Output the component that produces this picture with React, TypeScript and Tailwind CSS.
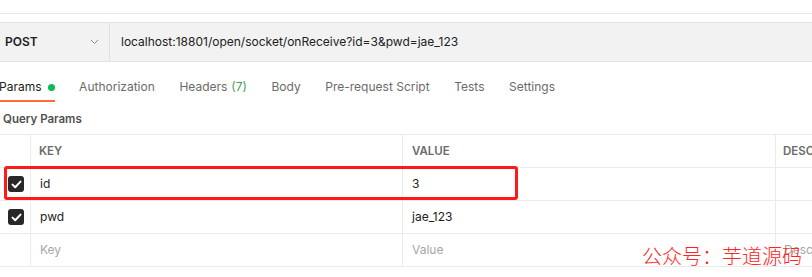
import React from "react";

const tabs = [
  { label: "Authorization" },
  { label: "Headers", count: "(7)" },
  { label: "Body" },
  { label: "Pre-request Script" },
  { label: "Tests" },
  { label: "Settings" },
];

const rows = [
  { key: "id", value: "3", checked: true },
  { key: "pwd", value: "jae_123", checked: true },
];

const Check = () => (
  <span className="flex h-[16px] w-[16px] items-center justify-center rounded-[3px] bg-[#282828]">
    <svg width="11" height="9" viewBox="0 0 11 9" fill="none">
      <path d="M1.5 4.6 L4.2 7.2 L9.5 1.6" stroke="#fff" strokeWidth="2" strokeLinecap="round" strokeLinejoin="round" />
    </svg>
  </span>
);

export default function App() {
  return (
    <div className="relative h-[277px] w-[812px] overflow-hidden bg-white font-['Inter','Liberation_Sans',sans-serif] text-[#212121]">
      <div className="h-[14px] border-b border-[#e8e8e8]" />

      {/* request bar */}
      <div className="mt-[8px] flex h-[40px] border-y border-[#e3e3e3] bg-[#f2f2f2]">
        <div className="flex w-[110px] items-center justify-between border-r border-[#e0e0e0] pl-[5px] pr-[10px]">
          <span className="text-[12px] font-semibold">POST</span>
          <svg width="9" height="6" viewBox="0 0 9 6" fill="none">
            <path d="M1 1 L4.5 4.5 L8 1" stroke="#8a8a8a" strokeWidth="1" />
          </svg>
        </div>
        <div className="flex items-center pl-[11px] text-[12px]">
          localhost:18801/open/socket/onReceive?id=3&amp;pwd=jae_123
        </div>
      </div>

      {/* tabs */}
      <div className="ml-[-1px] flex gap-[24.6px] text-[12px] text-[#6b6b6b]">
        <div className="flex items-center gap-[6px] border-b-2 border-[#ff6c37] pb-[3px] pt-[15px] leading-[20px] text-[#212121]">
          Params
          <span className="h-[7px] w-[7px] rounded-full bg-[#0cbb52]" />
        </div>
        {tabs.map((t) => (
          <div key={t.label} className="pb-[5px] pt-[15px] leading-[20px]">
            {t.label}
            {t.count && <span className="ml-[4px] text-[#3f9d5a]">{t.count}</span>}
          </div>
        ))}
      </div>

      <div className="mt-[9px] pl-[3px] text-[11.5px] font-semibold leading-[16px] text-[#505050]">
        Query Params
      </div>

      {/* params table */}
      <div className="mt-[7px] w-[880px] border-t border-[#ebebeb] text-[12px]">
        <div className="grid h-[33px] grid-cols-[31px_372px_373px_1fr] border-b border-[#ebebeb] text-[11.5px] font-semibold text-[#6b6b6b]">
          <div className="border-r border-[#ebebeb]" />
          <div className="flex items-center border-r border-[#ebebeb] pl-[8px] pt-[2px]">KEY</div>
          <div className="flex items-center border-r border-[#ebebeb] pl-[9px] pt-[2px]">VALUE</div>
          <div className="flex items-center pl-[7px] pt-[2px]">DESCRIPTION</div>
        </div>
        {rows.map((r) => (
          <div key={r.key} className="grid h-[33px] grid-cols-[31px_372px_373px_1fr] border-b border-[#ebebeb]">
            <div className="flex items-center justify-center border-r border-[#ebebeb] pl-[2px]">
              {r.checked && <Check />}
            </div>
            <div className="flex items-center border-r border-[#ebebeb] pl-[9px]">{r.key}</div>
            <div className="flex items-center border-r border-[#ebebeb] pl-[9px]">{r.value}</div>
            <div />
          </div>
        ))}
        <div className="grid h-[33px] grid-cols-[31px_372px_373px_1fr] border-b border-[#ebebeb] text-[#a6a6a6]">
          <div className="border-r border-[#ebebeb]" />
          <div className="flex items-center border-r border-[#ebebeb] pl-[9px]">Key</div>
          <div className="flex items-center border-r border-[#ebebeb] pl-[9px]">Value</div>
          <div className="flex items-center pl-[8px]">Description</div>
        </div>
      </div>

      {/* highlight annotation */}
      <div className="absolute left-[4px] top-[166px] h-[34px] w-[514px] rounded-[3px] border-[3px] border-[#ff1a1a]" />

      {/* watermark */}
      <div className="absolute left-[642px] top-[246px] font-['Noto_Sans_CJK_SC',sans-serif] text-[20px] font-extralight leading-[20px] text-[#ff2525]">
        公众号：芋道源码
      </div>
    </div>
  );
}
